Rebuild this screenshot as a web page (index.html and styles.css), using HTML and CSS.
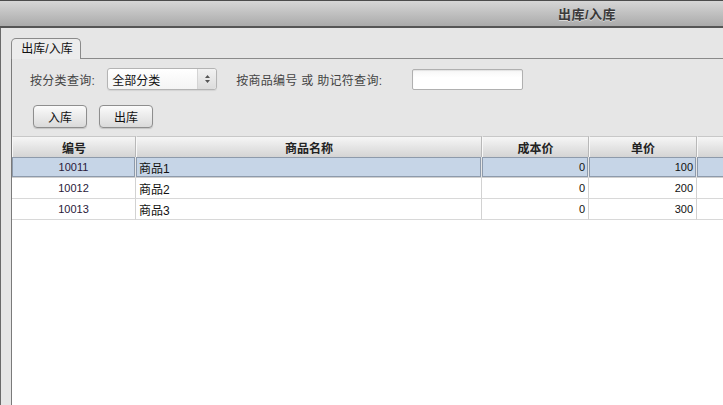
FILE: index.html
```html
<!DOCTYPE html>
<html lang="zh-CN">
<head>
  <meta charset="UTF-8" />
  <title>出库/入库</title>
  <link rel="stylesheet" href="styles.css">
</head>
<body>
  <div class="titlebar"><span class="title">出库/入库</span></div>

  <div class="window">
    <div class="tabs">
      <div class="tab">出库/入库</div>
      <div class="tab-rest"></div>
    </div>

    <div class="panel">
      <div class="filters">
        <span class="label">按分类查询:</span>
        <div class="select">
          <span class="select-text">全部分类</span>
          <span class="select-arrows">
            <svg width="7" height="10" viewBox="0 0 7 10"><path d="M3.5 1 L6 4 H1 Z M3.5 9 L6 6 H1 Z" fill="#555"/></svg>
          </span>
        </div>
        <span class="label label-2">按商品编号 或 助记符查询:</span>
        <input class="search" type="text" />
      </div>

      <div class="actions">
        <button class="btn">入库</button>
        <button class="btn">出库</button>
      </div>

      <div class="grid">
        <table>
          <thead>
            <tr>
              <th class="c-id">编号</th>
              <th class="c-name">商品名称</th>
              <th class="c-cost">成本价</th>
              <th class="c-price">单价</th>
              <th class="c-more"></th>
            </tr>
          </thead>
          <tbody>
            <tr class="selected">
              <td class="num-id">10011</td>
              <td>商品1</td>
              <td class="num">0</td>
              <td class="num">100</td>
              <td></td>
            </tr>
            <tr>
              <td class="num-id">10012</td>
              <td>商品2</td>
              <td class="num">0</td>
              <td class="num">200</td>
              <td></td>
            </tr>
            <tr>
              <td class="num-id">10013</td>
              <td>商品3</td>
              <td class="num">0</td>
              <td class="num">300</td>
              <td></td>
            </tr>
          </tbody>
        </table>
      </div>
    </div>
  </div>
</body>
</html>
```

FILE: styles.css
```css
body {
  margin: 0;
  width: 723px;
  height: 405px;
  overflow: hidden;
  background-color: #e6e6e6;
  font-family: "Liberation Sans", "Noto Sans CJK SC", sans-serif;
  font-size: 12px;
  color: #222;
  display: flex;
  flex-direction: column;
}

.titlebar {
  height: 25px;
  border-top: 1px solid #4c4c4c;
  border-bottom: 2px solid #555;
  background: linear-gradient(#d6d6d6, #aaaaaa);
  display: flex;
  align-items: center;
  padding-left: 558px;
}
.title {
  font-size: 13px;
  font-weight: bold;
  color: #3a3a3a;
  text-shadow: 0 1px 0 rgba(255,255,255,0.5);
  letter-spacing: 0.5px;
}

.window {
  flex: 1;
  display: flex;
  flex-direction: column;
  border-left: 1px solid #6a6a6a;
  padding-left: 10px;
  padding-top: 10px;
  min-height: 0;
}

.tabs {
  display: flex;
  height: 21px;
}
.tab {
  width: 66px;
  border: 1px solid #8a8a8a;
  border-bottom: none;
  border-radius: 5px 5px 0 0;
  background: #ececec;
  padding-left: 2px;
  line-height: 20px;
  color: #111;
  font-size: 12px;
  text-align: center;
}
.tab-rest {
  flex: 1;
  border-bottom: 1px solid #8a8a8a;
}

.panel {
  flex: 1;
  border-left: 1px solid #7a7a7a;
  display: flex;
  flex-direction: column;
  min-height: 0;
}

.filters {
  display: flex;
  align-items: center;
  height: 22px;
  margin-top: 9px;
  padding-left: 18px;
}
.label {
  color: #444;
  letter-spacing: 0.3px;
}
.select {
  margin-left: 12px;
  width: 108px;
  height: 20px;
  border: 1px solid #b4b4b4;
  border-radius: 3px;
  background: linear-gradient(#ffffff, #f4f4f4);
  display: flex;
  align-items: center;
  box-shadow: 0 1px 1px rgba(0,0,0,0.08);
}
.select-text {
  flex: 1;
  padding-left: 4px;
  color: #111;
}
.select-arrows {
  width: 18px;
  height: 20px;
  border-left: 1px solid #d4d4d4;
  background: linear-gradient(#f2f2f2, #dcdcdc);
  border-radius: 0 3px 3px 0;
  display: flex;
  align-items: center;
  justify-content: center;
}
.label-2 {
  margin-left: 19px;
}
.search {
  margin: 0 0 0 30px;
  width: 105px;
  height: 19px;
  padding: 0 2px;
  border: 1px solid #b0b0b0;
  border-radius: 2px;
  background: linear-gradient(#f6f6f6, #ffffff 40%);
  box-shadow: inset 0 1px 1px rgba(0,0,0,0.08);
}

.actions {
  display: flex;
  gap: 12px;
  margin-top: 15px;
  padding-left: 21px;
}
.btn {
  width: 54px;
  height: 23px;
  padding: 0;
  border: 1px solid #8e8e8e;
  border-radius: 4px;
  background: linear-gradient(#fbfbfb, #dadada);
  box-shadow: 0 1px 1px rgba(0,0,0,0.15);
  font-family: "Liberation Sans", "Noto Sans CJK SC", sans-serif;
  font-size: 12px;
  color: #111;
}

.grid {
  flex: 1;
  margin-top: 8px;
  background: #fff;
  overflow: hidden;
}
table {
  border-collapse: separate;
  border-spacing: 0;
  table-layout: fixed;
  width: 800px;
}
th {
  height: 20px;
  padding: 0;
  background: linear-gradient(#f6f6f6, #d4d4d4);
  border-top: 1px solid #c8c8c8;
  border-right: 1px solid #b8b8b8;
  border-left: 1px solid #f8f8f8;
  font-weight: bold;
  color: #222;
  font-size: 12px;
}
th.c-id { width: 122px; }
th.c-name { width: 344px; }
th.c-cost { width: 105px; }
th.c-price { width: 106px; }

td {
  height: 20px;
  padding: 0 3px;
  border-right: 1px solid #d2d2d2;
  border-bottom: 1px solid #d8d8d8;
  color: #111;
  white-space: nowrap;
}
td.num-id {
  text-align: center;
  color: #2a1a3a;
  font-family: "Liberation Sans", sans-serif;
  font-size: 11px;
}
td.num {
  text-align: right;
  font-family: "Liberation Sans", sans-serif;
  font-size: 11px;
}
tr.selected td {
  background: #c6d5e7;
  box-shadow: inset 0 0 0 1px #8d9aab;
  border-right-color: #e6e6e6;
  border-bottom-color: #d0d0d0;
}
```
